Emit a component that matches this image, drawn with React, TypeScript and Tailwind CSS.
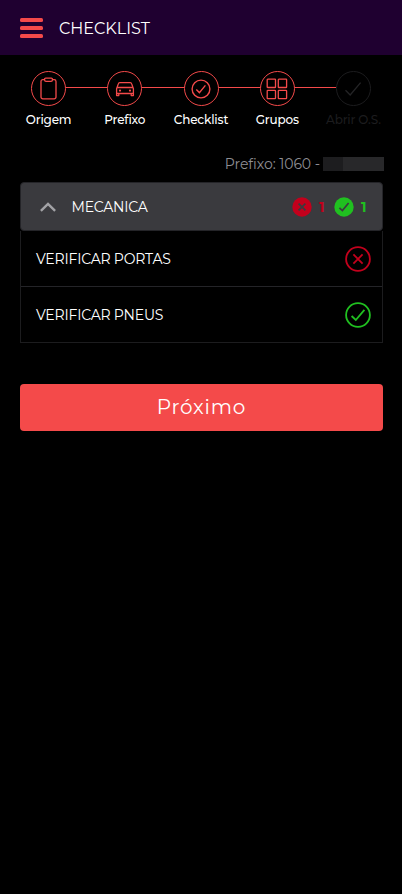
import type { ReactNode } from "react";

interface StepProps {
  label: string;
  icon: ReactNode;
  lineBefore?: boolean;
  lineAfter?: boolean;
  disabled?: boolean;
}

function ClipboardIcon() {
  return (
    <svg width="17" height="23" viewBox="0 0 17 23" fill="none" stroke="currentColor" strokeWidth="1.3">
      <path d="M4.5 2.6H2.8A1.8 1.8 0 0 0 1 4.4V20A1.8 1.8 0 0 0 2.8 21.8H14.2A1.8 1.8 0 0 0 16 20V4.4A1.8 1.8 0 0 0 14.2 2.6H12.5" />
      <path d="M5.6 1.1H11.4A1 1 0 0 1 12.4 2.1V2.9A1.4 1.4 0 0 1 11 4.3H6A1.4 1.4 0 0 1 4.6 2.9V2.1A1 1 0 0 1 5.6 1.1Z" />
    </svg>
  );
}

function CarIcon() {
  return (
    <svg width="20" height="18" viewBox="0 0 20 18" fill="none" stroke="currentColor" strokeWidth="1.3" strokeLinejoin="round">
      <path d="M1.6 13.5V8.8L3.3 3.9A1.6 1.6 0 0 1 4.8 2.7H15.2A1.6 1.6 0 0 1 16.7 3.9L18.4 8.8V13.5ZM2.2 7.5H17.8" />
      <path d="M1.6 13.5V15.6H3.8V13.5M16.2 13.5V15.6H18.4V13.5" />
      <circle cx="5" cy="10.6" r="1.1" fill="currentColor" stroke="none" />
      <circle cx="15" cy="10.6" r="1.1" fill="currentColor" stroke="none" />
    </svg>
  );
}

function CheckCircleIcon() {
  return (
    <svg width="20" height="20" viewBox="0 0 20 20" fill="none" stroke="currentColor" strokeWidth="1.4">
      <circle cx="10" cy="10" r="8.9" />
      <path d="M5.3 10.6L8.4 13.6L14.4 6.4" />
    </svg>
  );
}

function GridIcon() {
  return (
    <svg width="22" height="22" viewBox="0 0 22 22" fill="none" stroke="currentColor" strokeWidth="1.3">
      <rect x="1.2" y="1.2" width="8.3" height="8.3" rx="0.6" />
      <rect x="12.3" y="1.2" width="8.3" height="8.3" rx="0.6" />
      <rect x="1.2" y="12.3" width="8.3" height="8.3" rx="0.6" />
      <rect x="12.3" y="12.3" width="8.3" height="8.3" rx="0.6" />
    </svg>
  );
}

function CheckIcon() {
  return (
    <svg width="18" height="16" viewBox="0 0 18 16" fill="none" stroke="currentColor" strokeWidth="1.3">
      <path d="M1.5 9.3L6.2 14L16.6 1.6" />
    </svg>
  );
}

function StatusIcon({ ok }: { ok: boolean }) {
  return (
    <svg
      className={ok ? "text-[#20c020]" : "text-[#c3001c]"}
      width="26"
      height="26"
      viewBox="0 0 26 26"
      fill="none"
      stroke="currentColor"
      strokeWidth="1.8"
    >
      <circle cx="13" cy="13" r="11.9" />
      {ok ? <path d="M6.6 14L10.8 18L19.4 7.8" /> : <path d="M8.4 8.4L17.6 17.6M17.6 8.4L8.4 17.6" />}
    </svg>
  );
}

function CountBadge({ ok, count }: { ok: boolean; count: number }) {
  return (
    <div className={`flex items-center gap-[7px] ${ok ? "text-[#20c020]" : "text-[#c3001c]"}`}>
      <svg width="20" height="20" viewBox="0 0 20 20" fill="none">
        <circle cx="10" cy="10" r="9.7" fill="currentColor" />
        <path
          d={ok ? "M5.4 10.8L8.4 13.6L14.6 6" : "M6.6 6.6L13.4 13.4M13.4 6.6L6.6 13.4"}
          stroke="#3a3a3e"
          strokeWidth="1.7"
        />
      </svg>
      <span className="w-[8px] text-[14px] leading-5 font-bold">{count}</span>
    </div>
  );
}

function Step({ label, icon, lineBefore, lineAfter, disabled }: StepProps) {
  return (
    <div className="flex min-w-0 flex-1 flex-col items-center">
      <div className="flex w-full items-center">
        <div className={`mb-[2px] h-px flex-1 ${lineBefore ? "bg-[#f44a4a]" : ""}`} />
        <div
          className={`flex size-[35px] shrink-0 items-center justify-center rounded-full border ${
            disabled ? "border-[#1c1c1e] text-[#242426]" : "border-[#f44a4a] text-[#f44a4a]"
          }`}
        >
          {icon}
        </div>
        <div className={`mb-[2px] h-px flex-1 ${lineAfter ? "bg-[#f44a4a]" : ""}`} />
      </div>
      <span
        className={`mt-[5px] text-[12px] leading-[18px] font-medium tracking-[-0.17px] whitespace-nowrap ${
          disabled ? "text-[#1c1c1e]" : "text-white"
        }`}
      >
        {label}
      </span>
    </div>
  );
}

export default function App() {
  return (
    <div className="min-h-screen bg-black font-['Montserrat','Inter',sans-serif] text-white">
      <header className="flex h-[55px] items-center bg-[#1f0030] pl-5">
        <button className="flex w-[23px] flex-col gap-[4px]" aria-label="Menu">
          <span className="h-[4px] rounded-[1.5px] bg-[#f44a4a]" />
          <span className="h-[4px] rounded-[1.5px] bg-[#f44a4a]" />
          <span className="h-[4px] rounded-[1.5px] bg-[#f44a4a]" />
        </button>
        <h1 className="ml-4 pt-[2px] text-[16px] leading-6 font-normal">CHECKLIST</h1>
      </header>

      <nav className="flex px-[10.5px] pt-4">
        <Step label="Origem" icon={<ClipboardIcon />} lineAfter />
        <Step label="Prefixo" icon={<CarIcon />} lineBefore lineAfter />
        <Step label="Checklist" icon={<CheckCircleIcon />} lineBefore lineAfter />
        <Step label="Grupos" icon={<GridIcon />} lineBefore lineAfter />
        <Step label="Abrir O.S." icon={<CheckIcon />} lineBefore disabled />
      </nav>

      <div className="mt-[25px] flex h-5 items-center justify-end pr-[18px] text-[14px] leading-5 text-[#8e8e93]">
        <span className="tracking-[-0.05px] whitespace-nowrap">Prefixo: 1060 -</span>
        <div className="ml-[3px] flex h-[14px] w-[61px]">
          <div className="w-5 bg-[#1d1d1f]" />
          <div className="flex-1 bg-[#28282a]" />
        </div>
      </div>

      <section className="mt-[8px] mr-[19px] ml-5">
        <div className="flex h-[49px] items-center rounded-[4px] border border-[#242428] bg-[#3a3a3e] pr-[13px] pl-[19px]">
          <svg width="16" height="10" viewBox="0 0 16 10" fill="none" stroke="#a2a2a6" strokeWidth="2.4">
            <path d="M0.9 8.9L8 1.9L15.1 8.9" />
          </svg>
          <h2 className="ml-[15.5px] text-[14px] leading-5 font-normal tracking-[-0.2px]">MECANICA</h2>
          <div className="ml-auto flex gap-[7px]">
            <CountBadge ok={false} count={1} />
            <CountBadge ok count={1} />
          </div>
        </div>
        <div className="border-x border-[#1c1c1e]">
          <div className="flex h-[56px] items-center justify-between border-b border-[#242428] pr-[11px] pl-[15px]">
            <span className="pt-px text-[14px] leading-5 tracking-[-0.2px]">VERIFICAR PORTAS</span>
            <StatusIcon ok={false} />
          </div>
          <div className="flex h-[56px] items-center justify-between border-b border-[#1c1c1e] pr-[11px] pl-[15px]">
            <span className="pt-px text-[14px] leading-5 tracking-[-0.2px]">VERIFICAR PNEUS</span>
            <StatusIcon ok />
          </div>
        </div>
      </section>

      <button className="mt-[41px] ml-5 flex h-[47px] w-[363px] items-center justify-center rounded-[4px] bg-[#f44a4a] pb-px text-[20px] tracking-[0.8px]">
        Próximo
      </button>
    </div>
  );
}
